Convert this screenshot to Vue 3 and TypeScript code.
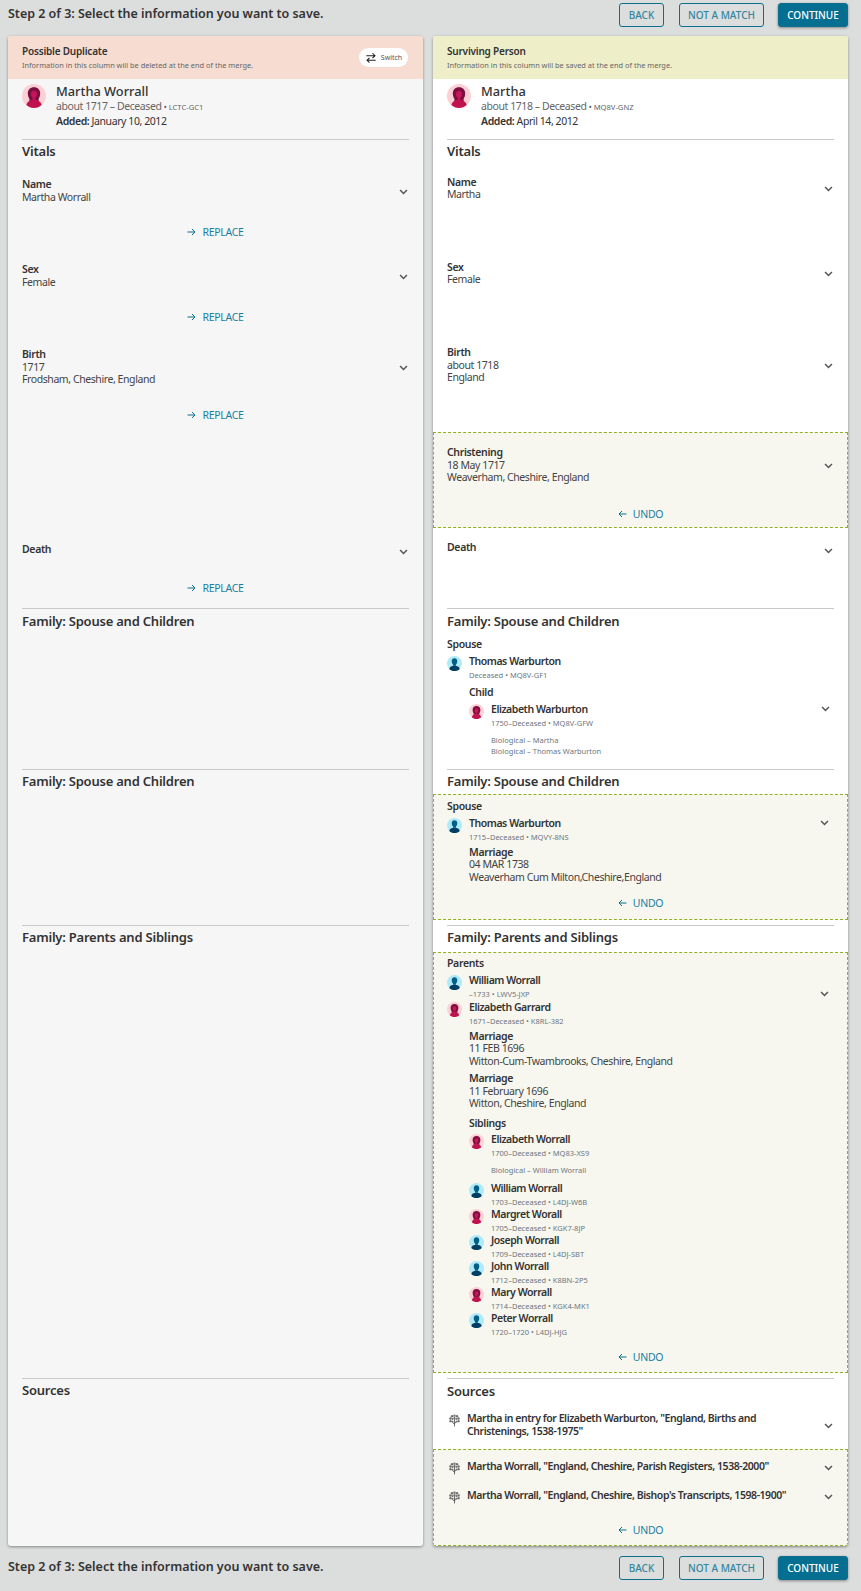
<script setup lang="ts">
interface Person { g: 'f' | 'm'; name: string; meta: string; bio?: string[] }
const fieldsLeft = [
  { cls: 'l-name', label: 'Name', lines: ['Martha Worrall'] },
  { cls: 'l-sex', label: 'Sex', lines: ['Female'] },
  { cls: 'l-birth', label: 'Birth', lines: ['1717', 'Frodsham, Cheshire, England'] },
  { cls: 'l-death', label: 'Death', lines: [] as string[] },
]
const parents: Person[] = [
  { g: 'm', name: 'William Worrall', meta: '–1733 • LWV5-JXP' },
  { g: 'f', name: 'Elizabeth Garrard', meta: '1671–Deceased • K8RL-382' },
]
const marriages = [
  ['11 FEB 1696', 'Witton-Cum-Twambrooks, Cheshire, England'],
  ['11 February 1696', 'Witton, Cheshire, England'],
]
const siblings: Person[] = [
  { g: 'f', name: 'Elizabeth Worrall', meta: '1700–Deceased • MQ83-XS9', bio: ['Biological – William Worrall'] },
  { g: 'm', name: 'William Worrall', meta: '1703–Deceased • L4DJ-W6B' },
  { g: 'f', name: 'Margret Worall', meta: '1705–Deceased • KGK7-8JP' },
  { g: 'm', name: 'Joseph Worrall', meta: '1709–Deceased • L4DJ-SBT' },
  { g: 'm', name: 'John Worrall', meta: '1712–Deceased • K8BN-2P5' },
  { g: 'f', name: 'Mary Worrall', meta: '1714–Deceased • KGK4-MK1' },
  { g: 'm', name: 'Peter Worrall', meta: '1720–1720 • L4DJ-HJG' },
]
const boxSources = [
  'Martha Worrall, "England, Cheshire, Parish Registers, 1538-2000"',
  'Martha Worrall, "England, Cheshire, Bishop\'s Transcripts, 1598-1900"',
]
</script>

<template>
  <div class="page">
    <svg class="defs" xmlns="http://www.w3.org/2000/svg">
      <symbol id="av-f" viewBox="0 0 24 24">
        <circle cx="12" cy="12" r="12" fill="#fcd0d5" />
        <path d="M12 3.200c-3.900 0-6.200 2.700-6.200 6 0 2.800 1 4.500 1.700 6l-.2 2h9.400l-.2-2c.7-1.500 1.700-3.200 1.700-6 0-3.300-2.300-6-6.200-6z" fill="#7c0f3f" />
        <path d="M12 6.800c-1.800 0-3 1.400-3 3.300 0 1.600.8 2.900 1.700 3.600v2h2.600v-2c.9-.7 1.700-2 1.700-3.600 0-1.900-1.200-3.300-3-3.300z" fill="#c9145a" />
        <path d="M4.400 21.100c.7-3.400 3.400-5.300 7.600-5.300s6.900 1.900 7.600 5.300C17.500 23 14.900 24 12 24s-5.500-1-7.600-2.900z" fill="#c0124f" />
      </symbol>
      <symbol id="av-m" viewBox="0 0 24 24">
        <circle cx="12" cy="12" r="12" fill="#aeeaf8" />
        <path d="M12 3.600c-2.700 0-4.400 1.900-4.400 4.800 0 2.400 1 4.200 2 5.300v2h4.800v-2c1-1.100 2-2.900 2-5.300 0-2.900-1.700-4.800-4.400-4.800z" fill="#045f86" />
        <path d="M3.600 20.700c.8-3.500 3.600-5.300 8.400-5.300s7.600 1.800 8.400 5.300c-2.100 2.100-5.100 3.300-8.400 3.300s-6.300-1.200-8.400-3.300z" fill="#003f63" />
      </symbol>
      <symbol id="tree" viewBox="0 0 14 16">
        <path d="M7 15.500V6M7 13 3.800 9.500M7 12l3.200-3" stroke="#555" stroke-width="1.100" fill="none" />
        <g fill="#6f6f6f">
          <circle cx="7" cy="1.800" r="1.500" /><circle cx="3.800" cy="2.600" r="1.500" /><circle cx="10.200" cy="2.600" r="1.500" />
          <circle cx="1.800" cy="5.500" r="1.500" /><circle cx="12.200" cy="5.500" r="1.500" /><circle cx="7" cy="5" r="1.400" />
          <circle cx="1.900" cy="8.800" r="1.500" /><circle cx="12.100" cy="8.800" r="1.500" /><circle cx="4.500" cy="6.200" r="1.300" /><circle cx="9.500" cy="6.200" r="1.300" />
          <circle cx="4.600" cy="9.400" r="1.200" /><circle cx="9.400" cy="9.400" r="1.200" />
        </g>
      </symbol>
      <symbol id="chev" viewBox="0 0 10 7">
        <path d="M1 1.200 5 5.200 9 1.200" stroke="#555" stroke-width="1.800" fill="none" />
      </symbol>
      <symbol id="arrow-r" viewBox="0 0 9 8">
        <path d="M.5 4H8M5 1l3 3-3 3" stroke="#0b6f8d" stroke-width="1" fill="none" />
      </symbol>
      <symbol id="arrow-l" viewBox="0 0 9 8">
        <path d="M8.500 4H1M4 1 1 4l3 3" stroke="#0b6f8d" stroke-width="1" fill="none" />
      </symbol>
    </svg>

    <div class="bar top">
      <div class="step">Step 2 of 3: Select the information you want to save.</div>
      <div class="btns">
        <button class="btn back">BACK</button>
        <button class="btn nomatch">NOT A MATCH</button>
        <button class="btn primary">CONTINUE</button>
      </div>
    </div>

    <div class="columns">
      <!-- Left column -->
      <div class="card left">
        <div class="chead dup">
          <div>
            <div class="ctitle">Possible Duplicate</div>
            <div class="csub">Information in this column will be deleted at the end of the merge.</div>
          </div>
          <div class="switch">
            <svg class="sw-ic" viewBox="0 0 14 14">
              <path d="M1.500 4.300h10M8.800 1.600l2.900 2.700-2.900 2.700M12.500 9.700h-10M5.200 7l-2.900 2.700 2.900 2.700" stroke="#222" stroke-width="1.200" fill="none" />
            </svg>
            <span>Switch</span>
          </div>
        </div>
        <div class="who">
          <svg class="av-lg"><use href="#av-f" /></svg>
          <div>
            <div class="who-name">Martha Worrall</div>
            <div class="who-sub">about 1717 – Deceased <span class="dot">•</span> <span class="pid">LCTC-GC1</span></div>
            <div class="who-add"><b>Added:</b> January 10, 2012</div>
          </div>
        </div>
        <div class="rule"></div>
        <h3 class="sh sh-lv">Vitals</h3>
        <div v-for="f in fieldsLeft" :key="f.label" class="frow" :class="f.cls">
          <div class="field">
            <div class="fbody">
              <div class="lab">{{ f.label }}</div>
              <div v-for="l in f.lines" :key="l" class="val">{{ l }}</div>
            </div>
            <svg class="chev"><use href="#chev" /></svg>
          </div>
          <div class="action replace"><svg class="arr"><use href="#arrow-r" /></svg>REPLACE</div>
        </div>
        <div class="rule"></div>
        <h3 class="sh h-l1">Family: Spouse and Children</h3>
        <div class="rule"></div>
        <h3 class="sh h-l2">Family: Spouse and Children</h3>
        <div class="rule"></div>
        <h3 class="sh h-l3">Family: Parents and Siblings</h3>
        <div class="rule"></div>
        <h3 class="sh">Sources</h3>
      </div>

      <!-- Right column -->
      <div class="card right">
        <div class="chead sur">
          <div>
            <div class="ctitle">Surviving Person</div>
            <div class="csub">Information in this column will be saved at the end of the merge.</div>
          </div>
        </div>
        <div class="who">
          <svg class="av-lg"><use href="#av-f" /></svg>
          <div>
            <div class="who-name">Martha</div>
            <div class="who-sub">about 1718 – Deceased <span class="dot">•</span> <span class="pid">MQ8V-GNZ</span></div>
            <div class="who-add"><b>Added:</b> April 14, 2012</div>
          </div>
        </div>
        <div class="rule"></div>
        <h3 class="sh sh-rv">Vitals</h3>
        <div class="frow r-name">
          <div class="field"><div class="fbody"><div class="lab">Name</div><div class="val">Martha</div></div><svg class="chev"><use href="#chev" /></svg></div>
        </div>
        <div class="frow r-sex">
          <div class="field"><div class="fbody"><div class="lab">Sex</div><div class="val">Female</div></div><svg class="chev"><use href="#chev" /></svg></div>
        </div>
        <div class="frow r-birth">
          <div class="field"><div class="fbody"><div class="lab">Birth</div><div class="val">about 1718</div><div class="val">England</div></div><svg class="chev"><use href="#chev" /></svg></div>
        </div>
        <div class="box b-chr">
          <div class="field"><div class="fbody"><div class="lab">Christening</div><div class="val">18 May 1717</div><div class="val">Weaverham, Cheshire, England</div></div><svg class="chev"><use href="#chev" /></svg></div>
          <div class="action undo"><svg class="arr"><use href="#arrow-l" /></svg>UNDO</div>
        </div>
        <div class="frow r-death">
          <div class="field"><div class="fbody"><div class="lab">Death</div></div><svg class="chev"><use href="#chev" /></svg></div>
        </div>

        <div class="rule"></div>
        <h3 class="sh sh-rf1">Family: Spouse and Children</h3>
        <div class="fam f1">
          <div class="lab">Spouse</div>
          <div class="pr">
            <svg class="av"><use href="#av-m" /></svg>
            <div><div class="pn">Thomas Warburton</div><div class="pm">Deceased • MQ8V-GF1</div></div>
          </div>
          <div class="indent">
            <div class="lab child-lab">Child</div>
            <div class="chev-row">
              <div class="pr">
                <svg class="av"><use href="#av-f" /></svg>
                <div>
                  <div class="pn">Elizabeth Warburton</div>
                  <div class="pm">1750–Deceased • MQ8V-GFW</div>
                  <div class="bio">
                    <div>Biological – Martha</div>
                    <div>Biological – Thomas Warburton</div>
                  </div>
                </div>
              </div>
              <svg class="chev c-p"><use href="#chev" /></svg>
            </div>
          </div>
        </div>

        <div class="rule"></div>
        <h3 class="sh sh-rf2">Family: Spouse and Children</h3>
        <div class="box b-sp">
          <div class="lab">Spouse</div>
          <div class="chev-row">
            <div class="pr">
              <svg class="av"><use href="#av-m" /></svg>
              <div><div class="pn">Thomas Warburton</div><div class="pm">1715–Deceased • MQVY-8NS</div></div>
            </div>
            <svg class="chev c-p"><use href="#chev" /></svg>
          </div>
          <div class="indent ev">
            <div class="lab">Marriage</div>
            <div class="val">04 MAR 1738</div>
            <div class="val">Weaverham Cum Milton,Cheshire,England</div>
          </div>
          <div class="action undo"><svg class="arr"><use href="#arrow-l" /></svg>UNDO</div>
        </div>
        <div class="rule rule-p"></div>
        <h3 class="sh sh-rp">Family: Parents and Siblings</h3>
        <div class="box b-par">
          <div class="lab">Parents</div>
          <div class="chev-row">
            <div>
              <div v-for="p in parents" :key="p.name" class="pr pr-par">
                <svg class="av"><use :href="'#av-' + p.g" /></svg>
                <div><div class="pn">{{ p.name }}</div><div class="pm">{{ p.meta }}</div></div>
              </div>
            </div>
            <svg class="chev c-par"><use href="#chev" /></svg>
          </div>
          <div class="indent">
            <div v-for="m in marriages" :key="m[0]" class="ev ev-m">
              <div class="lab">Marriage</div>
              <div v-for="l in m" :key="l" class="val">{{ l }}</div>
            </div>
            <div class="lab sib-lab">Siblings</div>
            <div v-for="s in siblings" :key="s.name + s.meta" class="pr pr-sib" :class="{ 'has-bio': s.bio }">
              <svg class="av"><use :href="'#av-' + s.g" /></svg>
              <div>
                <div class="pn">{{ s.name }}</div>
                <div class="pm">{{ s.meta }}</div>
                <div v-if="s.bio" class="bio"><div v-for="b in s.bio" :key="b">{{ b }}</div></div>
              </div>
            </div>
          </div>
          <div class="action undo"><svg class="arr"><use href="#arrow-l" /></svg>UNDO</div>
        </div>
        <div class="rule rule-s"></div>
        <h3 class="sh sh-rs">Sources</h3>
        <div class="src src-1">
          <svg class="tree"><use href="#tree" /></svg>
          <div class="src-t">Martha in entry for Elizabeth Warburton, "England, Births and Christenings, 1538-1975"</div>
          <svg class="chev c-src"><use href="#chev" /></svg>
        </div>
        <div class="box b-src">
          <div v-for="s in boxSources" :key="s" class="src src-b">
            <svg class="tree"><use href="#tree" /></svg>
            <div class="src-t">{{ s }}</div>
            <svg class="chev c-srcb"><use href="#chev" /></svg>
          </div>
          <div class="action undo"><svg class="arr"><use href="#arrow-l" /></svg>UNDO</div>
        </div>
      </div>
    </div>

    <div class="bar bottom">
      <div class="step">Step 2 of 3: Select the information you want to save.</div>
      <div class="btns">
        <button class="btn back">BACK</button>
        <button class="btn nomatch">NOT A MATCH</button>
        <button class="btn primary">CONTINUE</button>
      </div>
    </div>
  </div>
</template>

<style>
html, body { margin: 0; background: #dcdedd; }
</style>

<style scoped>
.page {
  width: 861px;
  height: 1591px;
  box-sizing: border-box;
  padding: 0 13px 0 8px;
  background: #dcdedd;
  font-family: "Noto Sans", "Open Sans", sans-serif;
  font-size: 10px;
  color: #333;
  overflow: hidden;
}
.defs { display: none; }
.bar { display: flex; justify-content: space-between; }
.top { height: 36px; padding-top: 3px; box-sizing: border-box; }
.bottom { height: 45px; padding-top: 10px; box-sizing: border-box; }
.step { font-size: 12.500px; letter-spacing: -0.02px; font-weight: 600; line-height: 22px; color: #333; }
.btns { display: flex; }
.btn {
  height: 24px;
  box-sizing: border-box;
  border: 1px solid #0b6f8d;
  border-radius: 3px;
  background: transparent;
  color: #33869f;
  font-family: inherit;
  font-size: 10px;
  font-weight: 500;
  padding: 0;
}
.back { width: 45px; margin-right: 15px; }
.nomatch { width: 85px; margin-right: 14px; }
.primary {
  width: 70px;
  background: #046f90;
  color: #fff;
  box-shadow: 0 1px 3px rgba(0, 0, 0, 0.4);
}
.columns { display: grid; grid-template-columns: 415px 415px; column-gap: 10px; height: 1510px; }
.card {
  border-radius: 3px;
  box-shadow: 0 1px 3px rgba(0, 0, 0, 0.4);
  overflow: hidden;
}
.left { background: #f6f6f6; }
.right { background: #fff; }
.chead {
  height: 43px;
  box-sizing: border-box;
  padding: 8px 15px 0 14px;
  display: flex;
  justify-content: space-between;
}
.dup { background: #f7dcd1; }
.sur { background: #eeeec9; }
.ctitle { font-size: 10px; letter-spacing: -0.2px; font-weight: 600; line-height: 14px; color: #333; }
.csub { font-size: 7.400px; line-height: 11px; color: #666; margin-top: 2px; }
.switch {
  width: 49px;
  height: 19px;
  margin-top: 4px;
  border-radius: 10px;
  background: #fff;
  display: flex;
  align-items: center;
  justify-content: center;
  font-size: 7px;
  color: #555;
  flex: none;
}
.sw-ic { width: 12px; height: 12px; margin-right: 4px; }
.who { height: 60px; box-sizing: border-box; padding: 5px 14px 0; display: flex; }
.av-lg { width: 24px; height: 24px; margin-right: 10px; flex: none; }
.who-name { font-size: 12.800px; font-weight: 500; line-height: 16px; color: #333; margin-top: -1px; }
.who-sub { font-size: 10.500px; letter-spacing: -0.42px; line-height: 14px; color: #666; }
.dot { font-size: 8px; color: #555; }
.pid { font-size: 7.600px; letter-spacing: 0; color: #666; }
.who-add { font-size: 10.500px; letter-spacing: -0.42px; line-height: 14px; color: #333; }
.who-add b { font-weight: 600; }
.rule { height: 1px; background: #c9c9c9; margin: 0 14px; }
.rule-p { margin-top: 5px; }
.rule-s { margin-top: 5px; }
.sh {
  margin: 0;
  padding: 2px 14px 0;
  box-sizing: border-box;
  font-size: 13px;
  letter-spacing: -0.22px;
  font-weight: 600;
  line-height: 18px;
  color: #333;
}
.sh-lv { height: 38px; }
.sh-rv { height: 36px; }
.h-l1 { height: 160px; padding-top: 3px; }
.h-l2 { height: 155px; }
.h-l3 { height: 452px; }
.sh-rf1 { height: 29px; padding-top: 3px; }
.sh-rf2 { height: 24px; }
.sh-rp { height: 26px; }
.sh-rs { height: 33px; padding-top: 3px; }
.frow { box-sizing: border-box; }
.l-name { height: 85px; }
.l-sex { height: 85px; }
.l-birth { height: 195px; }
.l-death { height: 65px; }
.r-name { height: 85px; }
.r-sex { height: 85px; }
.r-birth { height: 86px; }
.r-death { height: 80px; padding-top: 13px; }
.field {
  display: flex;
  justify-content: space-between;
  align-items: center;
  padding: 0 15px 0 14px;
  min-height: 18px;
}
.fbody { align-self: flex-start; }
.lab { font-size: 10.500px; letter-spacing: -0.35px; font-weight: 600; line-height: 12.500px; color: #333; }
.val { font-size: 10.500px; letter-spacing: -0.42px; line-height: 12.500px; color: #444; }
.r-name .lab, .r-sex .lab { line-height: 12px; }
.chev { width: 9px; height: 6px; flex: none; margin-top: 2px; }
.l-death .chev { margin-top: 0; }
.action {
  display: flex;
  justify-content: center;
  align-items: center;
  font-size: 10.500px;
  letter-spacing: -0.3px;
  line-height: 14px;
  color: #1a7f9f;
}
.arr { width: 9px; height: 8px; margin-right: 6px; flex: none; }
.replace { margin-top: 22px; }
.l-death .replace { margin-top: 20px; }
.box {
  background: #f7f7ef;
  border: 1px dashed #8fb01f;
  box-sizing: border-box;
  display: flex;
  flex-direction: column;
}
.box > .lab { padding-left: 13px; }
.undo { margin-top: auto; padding-bottom: 8px; }
.b-chr { height: 96px; padding-top: 13px; }
.b-chr .undo { padding-bottom: 6px; }
.b-chr .field { padding-left: 13px; padding-right: 14px; }
.b-sp { height: 126px; padding-top: 5px; }
.b-sp .undo { padding-bottom: 9px; }
.b-par { height: 421px; padding-top: 4px; }
.b-src { height: 97px; padding-top: 10px; }
.fam { height: 131px; }
.fam > .lab { padding-left: 14px; }
.pr { display: flex; height: 27px; padding-left: 14px; box-sizing: border-box; flex: none; }
.box .pr { padding-left: 13px; }
.chev-row { display: flex; justify-content: space-between; margin-top: 3px; padding-right: 18px; }
.fam > .pr { margin-top: 3px; }
.fam .chev-row { margin-top: 4px; }
.av { width: 15px; height: 15px; margin: 2px 7px 0 0; flex: none; }
.pn { font-size: 10.500px; letter-spacing: -0.45px; font-weight: 600; line-height: 14px; color: #333; white-space: nowrap; }
.pm { font-size: 7.500px; line-height: 12px; margin-top: 1px; color: #6d7680; white-space: nowrap; }
.bio { font-size: 7.500px; line-height: 11px; margin-top: 6px; color: #6d7680; white-space: nowrap; }
.indent { padding-left: 35px; }
.fam .indent { padding-left: 36px; }
.indent .pr { padding-left: 0; }
.child-lab { margin-top: 5px; }
.ev { margin-top: 3px; }
.ev-m + .ev-m { margin-top: 5px; }
.sib-lab { margin-top: 7px; margin-bottom: 3px; }
.pr-sib { height: 26px; }
.pr-sib.has-bio { height: 49px; }
.c-p { margin-top: 4px; }
.c-par { margin-top: 18px; }
.src { display: flex; padding: 0 15px 0 16px; }
.box .src { padding: 0 14px 0 15px; }
.src-1 { height: 37px; align-items: flex-start; }
.src-b { height: 29px; }
.tree { width: 11px; height: 13px; margin: 2px 7px 0 0; flex: none; }
.src-t { font-size: 10.500px; letter-spacing: -0.44px; font-weight: 600; line-height: 13px; color: #333; flex: 1; }
.c-src { margin-top: 11px; margin-left: 20px; }
.c-srcb { margin-top: 5px; margin-left: 20px; }
</style>
